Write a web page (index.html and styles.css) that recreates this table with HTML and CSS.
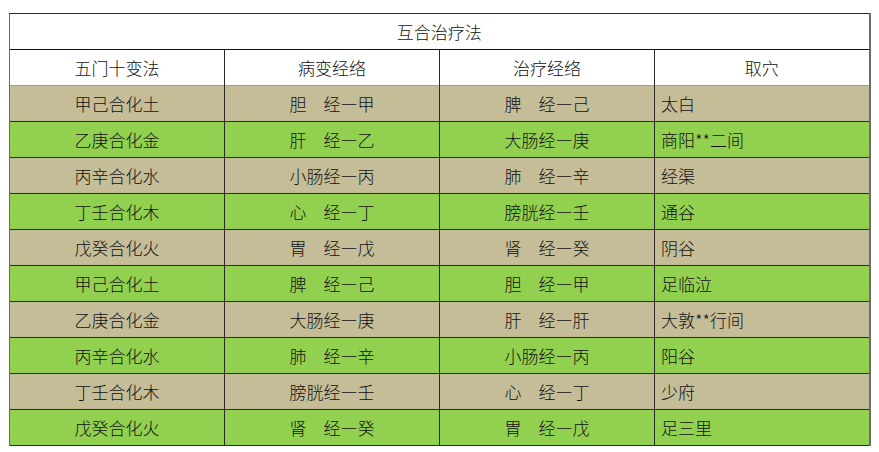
FILE: index.html
```html
<!DOCTYPE html>
<html lang="zh">
<head>
<meta charset="utf-8">
<link rel="stylesheet" href="styles.css">
</head>
<body>
<table class="tbl">
  <colgroup><col class="c"><col class="c"><col class="c"><col class="c"></colgroup>
  <tr class="title"><td colspan="4">互合治疗法</td></tr>
  <tr class="head"><td>五门十变法</td><td>病变经络</td><td>治疗经络</td><td>取穴</td></tr>
  <tr class="tan"><td>甲己合化土</td><td>胆　经—甲</td><td>脾　经—己</td><td class="l">太白</td></tr>
  <tr class="grn"><td>乙庚合化金</td><td>肝　经—乙</td><td>大肠经—庚</td><td class="l">商阳**二间</td></tr>
  <tr class="tan"><td>丙辛合化水</td><td>小肠经—丙</td><td>肺　经—辛</td><td class="l">经渠</td></tr>
  <tr class="grn"><td>丁壬合化木</td><td>心　经—丁</td><td>膀胱经—壬</td><td class="l">通谷</td></tr>
  <tr class="tan"><td>戊癸合化火</td><td>胃　经—戊</td><td>肾　经—癸</td><td class="l">阴谷</td></tr>
  <tr class="grn"><td>甲己合化土</td><td>脾　经—己</td><td>胆　经—甲</td><td class="l">足临泣</td></tr>
  <tr class="tan"><td>乙庚合化金</td><td>大肠经—庚</td><td>肝　经—肝</td><td class="l">大敦**行间</td></tr>
  <tr class="grn"><td>丙辛合化水</td><td>肺　经—辛</td><td>小肠经—丙</td><td class="l">阳谷</td></tr>
  <tr class="tan"><td>丁壬合化木</td><td>膀胱经—壬</td><td>心　经—丁</td><td class="l">少府</td></tr>
  <tr class="grn"><td>戊癸合化火</td><td>肾　经—癸</td><td>胃　经—戊</td><td class="l">足三里</td></tr>
</table>
</body>
</html>
```
FILE: styles.css
```css
html, body {
  margin: 0;
  padding: 0;
  background: #ffffff;
}
body {
  padding: 13px 0 0 9px;
  font-family: "Noto Sans CJK SC", "Noto Sans", sans-serif;
  font-size: 17px;
  font-weight: 300;
  color: #111111;
}
.tbl {
  border-collapse: collapse;
  table-layout: fixed;
  width: 859px;
  border-top: 1px solid #6b6b6b;
  border-left: 1px solid #6b6b6b;
  border-right: 2px solid #6b6b6b;
  border-bottom: 1px solid #2a2a2a;
}
.c { width: 215px; }
.tbl td {
  height: 35px;
  padding: 0 6px;
  text-align: center;
  vertical-align: middle;
  border-left: 1px solid #2a2a2a;
  border-top: 1px solid #2a2a2a;
  line-height: 20px;
  white-space: nowrap;
}
.tbl td.l { text-align: left; }
.title td {
  background: #ffffff;
  border-left: 1px solid #6b6b6b;
}
.head td {
  background: #ffffff;
  border-top: 1px solid #111111;
}
.tan td { background: #c4bd97; }
.grn td { background: #92d050; }
.tbl tr td:first-child { border-left-color: #6b6b6b; }
.tbl tr:nth-child(3) td { border-top: 1px solid #a0a0a0; }
```
